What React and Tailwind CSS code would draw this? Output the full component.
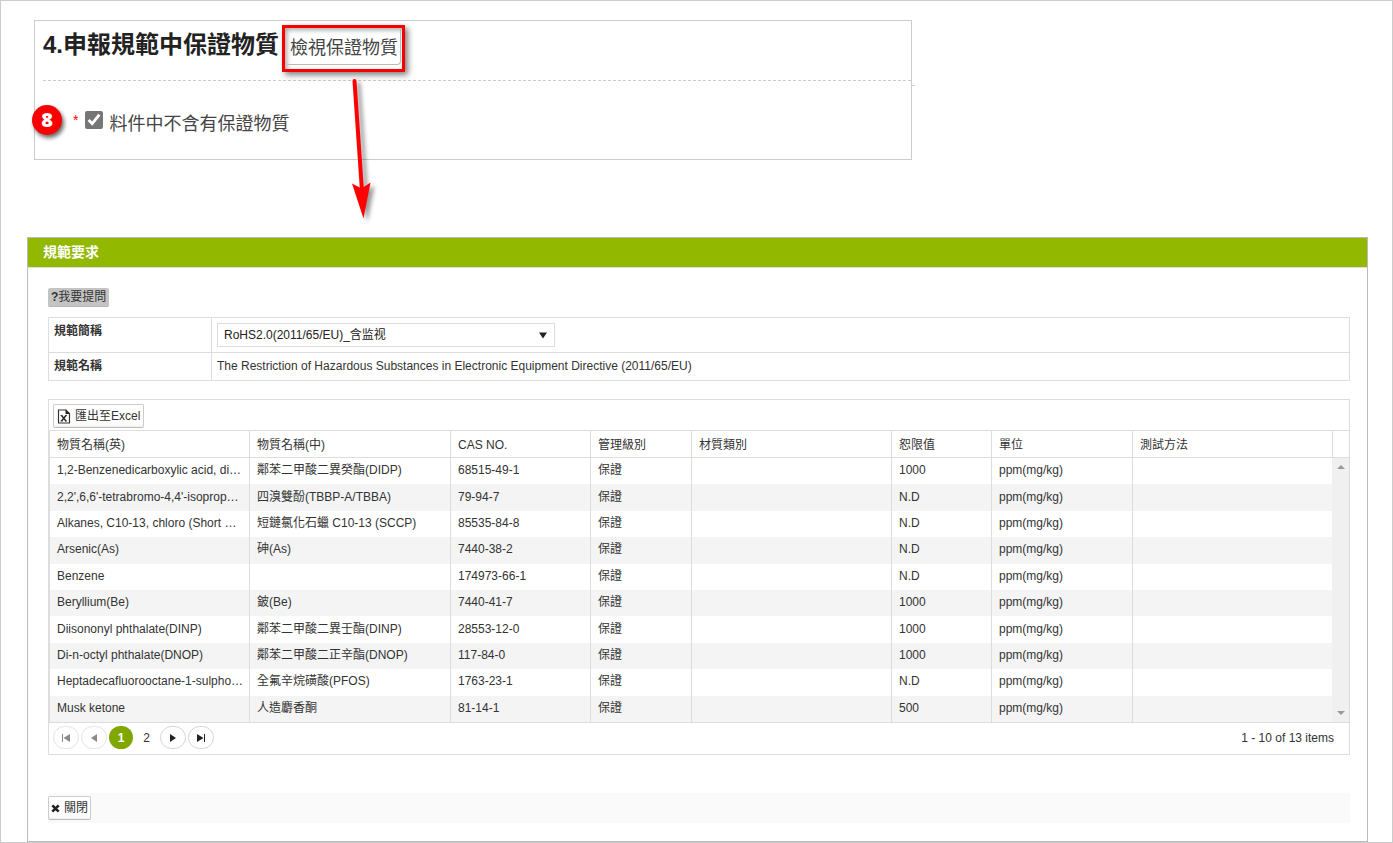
import React, { useState } from "react";

const ROWS = [
  ["1,2-Benzenedicarboxylic acid, di…", "鄰苯二甲酸二異癸酯(DIDP)", "68515-49-1", "保證", "", "1000", "ppm(mg/kg)", ""],
  ["2,2',6,6'-tetrabromo-4,4'-isoprop…", "四溴雙酚(TBBP-A/TBBA)", "79-94-7", "保證", "", "N.D", "ppm(mg/kg)", ""],
  ["Alkanes, C10-13, chloro (Short …", "短鏈氯化石蠟 C10-13 (SCCP)", "85535-84-8", "保證", "", "N.D", "ppm(mg/kg)", ""],
  ["Arsenic(As)", "砷(As)", "7440-38-2", "保證", "", "N.D", "ppm(mg/kg)", ""],
  ["Benzene", "", "174973-66-1", "保證", "", "N.D", "ppm(mg/kg)", ""],
  ["Beryllium(Be)", "鈹(Be)", "7440-41-7", "保證", "", "1000", "ppm(mg/kg)", ""],
  ["Diisononyl phthalate(DINP)", "鄰苯二甲酸二異壬酯(DINP)", "28553-12-0", "保證", "", "1000", "ppm(mg/kg)", ""],
  ["Di-n-octyl phthalate(DNOP)", "鄰苯二甲酸二正辛酯(DNOP)", "117-84-0", "保證", "", "1000", "ppm(mg/kg)", ""],
  ["Heptadecafluorooctane-1-sulpho…", "全氟辛烷磺酸(PFOS)", "1763-23-1", "保證", "", "N.D", "ppm(mg/kg)", ""],
  ["Musk ketone", "人造麝香酮", "81-14-1", "保證", "", "500", "ppm(mg/kg)", ""],
];

const HEADERS = ["物質名稱(英)", "物質名稱(中)", "CAS NO.", "管理級別", "材質類別", "恕限值", "單位", "測試方法"];

function ExcelIcon() {
  return (
    <svg width="14" height="15" viewBox="0 0 14 15" aria-hidden="true">
      <path d="M1.500 1h7.500L12.500 4.500V14h-11z" fill="#fff" stroke="#333" strokeWidth="1.200" />
      <path d="M8.500 0.800V5h4.300z" fill="#222" />
      <path d="M4.500 6.500l4.500 5.500M9 6.500L4.500 12" stroke="#222" strokeWidth="1.400" />
      <path d="M3.500 6.500h2M8 6.500h2M3.500 12h2M8 12h2" stroke="#222" strokeWidth="0.800" />
    </svg>
  );
}

function CloseIcon() {
  return (
    <svg width="9" height="9" viewBox="0 0 9 9" aria-hidden="true">
      <path d="M1.300 1.300l6.400 6.400M7.700 1.300L1.300 7.700" stroke="#222" strokeWidth="2.600" />
    </svg>
  );
}

function PagerButton({ label, path, disabled }) {
  return (
    <button
      type="button"
      aria-label={label}
      disabled={disabled}
      className="flex h-[23px] w-[26px] items-center justify-center rounded-full border border-[#d5d5d5] text-[#222] disabled:border-[#e4e4e4] disabled:text-[#8a8a8a]"
    >
      <svg width="10" height="10" viewBox="0 0 10 10" fill="currentColor" aria-hidden="true">
        <path d={path} />
      </svg>
    </button>
  );
}

function Declaration() {
  const [checked, setChecked] = useState(true);
  return (
    <section className="relative mr-[480px] ml-[33px] border border-[#ccc]">
      <div className="ml-2 flex h-[60px] items-start border-b border-dashed border-[#ccc]">
        <h2 className="mt-1.5 text-2xl leading-9 font-bold text-[#222]">4.申報規範中保證物質</h2>
        <div className="mt-1 ml-[3px] border-3 border-[#f60000] pr-px pb-1 shadow-[3px_3px_6px_rgba(0,0,0,0.5),inset_2px_2px_5px_rgba(0,0,0,0.35)]">
          <button type="button" className="block h-[37px] rounded-b-sm border-r border-b border-[#bbb] pt-1 pr-0.5 pl-[5px] text-lg leading-8 text-[#444]">
            檢視保證物質
          </button>
        </div>
      </div>
      <span className="absolute top-16 -right-1 w-[3px] border-t border-[#ccc]" />
      <div className="flex h-[78px] items-center pl-[38px]">
        <span className="text-sm leading-5 text-[#f00]">*</span>
        <input
          id="no-guarantee"
          type="checkbox"
          checked={checked}
          onChange={(e) => setChecked(e.target.checked)}
          className="ml-[7px] h-[18px] w-[18px] accent-[#767676]"
        />
        <label htmlFor="no-guarantee" className="ml-1.5 pt-2 text-lg leading-6 text-[#444]">
          料件中不含有保證物質
        </label>
      </div>
      <span className="absolute top-[84px] -left-[3px] flex h-[30px] w-[30px] items-center justify-center rounded-full bg-[#fa0000] font-['Open_Sans',sans-serif] text-xl leading-none font-extrabold text-white shadow-[2px_3px_4px_rgba(0,0,0,0.6)]">
        8
      </span>
      <svg className="absolute top-[50px] left-[310px] overflow-visible" width="40" height="155" viewBox="0 0 40 155" aria-hidden="true">
        <g className="drop-shadow-[4px_3px_2px_rgba(0,0,0,0.4)]">
          <path d="M9.500 10L17 120" stroke="#f00" strokeWidth="4" strokeLinecap="round" />
          <path d="M7 112.500L16.500 117.500L25.500 111.500L18.500 147.500z" fill="#f00" />
        </g>
      </svg>
    </section>
  );
}

function SpecTable() {
  return (
    <table className="mt-[10px] w-full border-collapse border border-[#ddd]">
      <tbody>
        <tr className="border-b border-[#ddd]">
          <th scope="row" className="w-[163px] border-r border-[#ddd] px-[5px] py-1 text-left align-top leading-[18px]">
            <label htmlFor="spec">規範簡稱</label>
          </th>
          <td className="p-[5px]">
            <div className="relative w-[338px]">
              <select id="spec" className="block h-6 w-full appearance-none border border-[#ddd] bg-white px-1.5 text-xs text-[#222]">
                <option>RoHS2.0(2011/65/EU)_含监视</option>
              </select>
              <svg className="pointer-events-none absolute top-[9px] right-2" width="8" height="7" viewBox="0 0 8 7" aria-hidden="true">
                <path d="M0 0.500h8L4 6.500z" fill="#222" />
              </svg>
            </div>
          </td>
        </tr>
        <tr>
          <th scope="row" className="border-r border-[#ddd] px-[5px] py-1 text-left align-top leading-[18px]">規範名稱</th>
          <td className="px-[5px] pt-1 pb-[5px] align-top leading-[18px]">
            The Restriction of Hazardous Substances in Electronic Equipment Directive (2011/65/EU)
          </td>
        </tr>
      </tbody>
    </table>
  );
}

function SubstanceGrid() {
  return (
    <section className="mt-[18px] border border-[#ddd]">
      <div className="flex h-[30px] items-center px-1 pt-0.5">
        <button type="button" className="flex h-6 items-center gap-1 rounded-xs border border-[#ccc] border-b-[#bbb] bg-[linear-gradient(#fff_85%,#f0f0f0)] px-[3px] leading-5">
          <ExcelIcon />
          匯出至Excel
        </button>
      </div>
      <div className="flex border-y border-[#ddd]">
        <div className="min-w-0 flex-1">
          <table className="h-[291px] w-full table-fixed border-separate border-spacing-0">
            <colgroup>
              <col className="w-[200px]" />
              <col className="w-[201px]" />
              <col className="w-[140px]" />
              <col className="w-[101px]" />
              <col className="w-[200px]" />
              <col className="w-[100px]" />
              <col className="w-[141px]" />
              <col className="w-[200px]" />
            </colgroup>
            <thead>
              <tr>
                {HEADERS.map((h) => (
                  <th key={h} scope="col" className="h-[27px] border-b border-l border-[#ddd] px-[7px] pt-0.5 text-left leading-[18px] font-normal">
                    {h}
                  </th>
                ))}
              </tr>
            </thead>
            <tbody>
              {ROWS.map((row) => (
                <tr key={row[0]} className="even:bg-[#f4f4f4]">
                  {row.map((cell, i) => (
                    <td key={i} className="truncate border-l border-[#ddd] pr-1 pb-0.5 pl-[7px] leading-[18px]">
                      {cell}
                    </td>
                  ))}
                </tr>
              ))}
            </tbody>
          </table>
        </div>
        <div className="flex w-[17px] flex-col" aria-hidden="true">
          <div className="h-[27px] border-b border-l border-[#ddd]" />
          <div className="flex flex-1 flex-col items-center justify-between bg-[#f0f0f0] py-[7px]">
            <svg width="8" height="4" viewBox="0 0 8 4"><path d="M4 0l4 4H0z" fill="#999" /></svg>
            <svg width="8" height="4" viewBox="0 0 8 4"><path d="M0 0h8L4 4z" fill="#999" /></svg>
          </div>
        </div>
      </div>
      <nav className="flex h-[31px] items-center gap-0.5 pr-[15px] pb-0.5 pl-1" aria-label="Pages">
        <PagerButton label="First page" disabled path="M1 1h1v8H1zM9 1v8L2.500 5z" />
        <PagerButton label="Previous page" disabled path="M8 1v8L2 5z" />
        <button type="button" className="h-[23px] w-6 rounded-full bg-[#7fa700] font-bold text-white">1</button>
        <button type="button" className="h-[23px] w-[23px]">2</button>
        <PagerButton label="Next page" path="M2 1v8L8 5z" />
        <PagerButton label="Last page" path="M8 1h1v8H8zM1 1v8L7.500 5z" />
        <span className="ml-auto">1 - 10 of 13 items</span>
      </nav>
    </section>
  );
}

export default function App() {
  return (
    <div className="border border-[#ccc] bg-white pt-[19px] font-['Liberation_Sans','Noto_Sans_CJK_TC',sans-serif] text-xs text-[#333]">
      <Declaration />
      <main className="mt-[77px] mr-6 ml-[26px] border border-[#bbb]">
        <h1 className="border-b border-[#ddd] bg-[#92b800] px-[15px] text-sm leading-[29px] font-bold text-white">規範要求</h1>
        <div className="pt-5 pr-[17px] pb-[18px] pl-5">
          <button type="button" className="block h-[19px] rounded-xs border-b border-[#b5b5b5] bg-[#c4c4c4] px-[3px] leading-[18px]">
            <b>?</b>我要提問
          </button>
          <SpecTable />
          <SubstanceGrid />
          <footer className="mt-[38px] flex h-[30px] items-center bg-[#fafafa]">
            <button type="button" className="flex h-6 items-center gap-1 rounded-xs border border-[#ccc] border-b-[#bbb] bg-[linear-gradient(#fff_85%,#f0f0f0)] px-0.5 leading-5">
              <CloseIcon />
              關閉
            </button>
          </footer>
        </div>
      </main>
    </div>
  );
}
